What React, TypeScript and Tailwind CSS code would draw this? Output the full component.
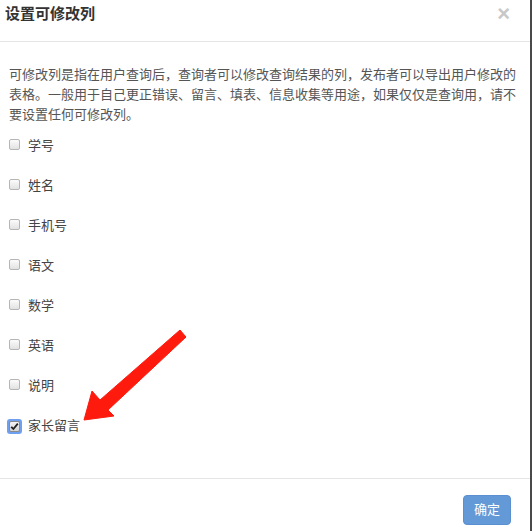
const fields = ["学号", "姓名", "手机号", "语文", "数学", "英语", "说明", "家长留言"];

const font = { fontFamily: '"Liberation Sans", "Noto Sans CJK SC", sans-serif' };

function Box({ checked }: { checked: boolean }) {
  if (checked) {
    return (
      <div className="flex h-[15px] w-[15px] items-center justify-center rounded-[3px] bg-[#6e9ff0]">
        <div className="flex h-[11px] w-[11px] items-center justify-center rounded-[2px] border border-[#8a8a8a] bg-gradient-to-b from-[#f4f4f4] to-[#d4d4d4]">
          <svg width="9" height="9" viewBox="0 0 9 9">
            <path d="M1.2 4.8 L3.4 7 L7.8 1.6" fill="none" stroke="#222" strokeWidth="1.8" />
          </svg>
        </div>
      </div>
    );
  }
  return (
    <div className="h-[11px] w-[11px] rounded-[2px] border border-[#b5b5b5] bg-gradient-to-b from-[#fbfbfb] to-[#e2e2e2]" />
  );
}

export default function App() {
  return (
    <div className="flex h-[531px] w-[532px] text-[#333]" style={font}>
      <div className="relative flex flex-1 flex-col bg-white">
        {/* HEADER */}
        <div className="flex h-[42px] items-start justify-between border-b border-[#e5e5e5] pl-[5px] pr-[20px] pt-[4px]">
          <h4 className="text-[15px] font-bold leading-[20px] text-[#333]">设置可修改列</h4>
          <span className="text-[22px] font-bold leading-[20px] text-[#c8c8c8]">×</span>
        </div>

        {/* BODY */}
        <div className="flex-1 px-[9px] pt-[23px]">
          <p className="text-[13px] leading-[20px] text-[#555]">
            可修改列是指在用户查询后，查询者可以修改查询结果的列，发布者可以导出用户修改的表格。一般用于自己更正错误、留言、填表、信息收集等用途，如果仅仅是查询用，请不要设置任何可修改列。
          </p>
          <div className="mt-[1px]">
            {fields.map((f) => {
              const checked = f === "家长留言";
              return (
                <div key={f} className="flex h-[40px] items-center">
                  <div className={checked ? "ml-[-2px] w-[21px]" : "w-[19px] pb-[3px]"}>
                    <Box checked={checked} />
                  </div>
                  <span className="text-[13px] leading-[20px] text-[#444]">{f}</span>
                </div>
              );
            })}
          </div>
        </div>

        {/* FOOTER */}
        <div className="flex h-[53px] items-start justify-end border-t border-[#e5e5e5] pr-[19px] pt-[16px]">
          <button className="h-[30px] w-[48px] rounded-[4px] border border-[#5a8fd0] bg-[#6399d6] text-[13px] text-white">
            确定
          </button>
        </div>

        {/* ARROW */}
        <svg className="absolute left-0 top-0" width="530" height="531" viewBox="0 0 530 531">
          <polygon
            points="180,330 186,337 108,410 114,416 84,420 92,391 100,400"
            fill="#fe1a0d"
            stroke="#fe1a0d"
            strokeWidth="1"
            strokeLinejoin="round"
          />
        </svg>
      </div>
      <div className="w-[2px] bg-[#4a4a4a]" />
    </div>
  );
}
